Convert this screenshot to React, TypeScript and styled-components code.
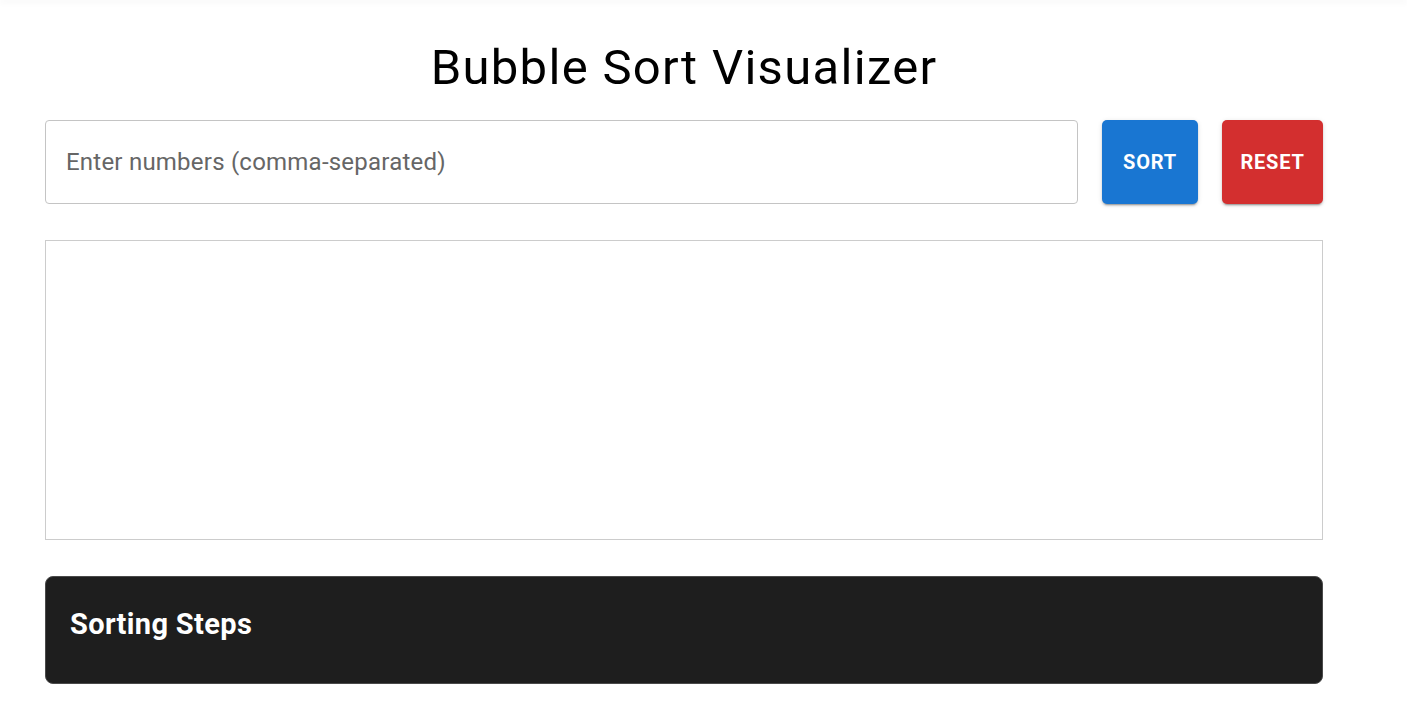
import React from "react";
import styled, { createGlobalStyle } from "styled-components";

const GlobalStyle = createGlobalStyle`
  html, body {
    margin: 0;
    padding: 0;
    background: #ffffff;
    font-family: Roboto, "Noto Sans", "Liberation Sans", sans-serif;
  }
  * { box-sizing: border-box; }
`;

const TopShade = styled.div`
  height: 0;
  width: 100%;
  box-shadow: 0 1px 6px 1px rgba(0, 0, 0, 0.07);
`;

const Page = styled.main`
  padding: 0 0 33px 45px;
`;

const Container = styled.div`
  width: 1278px;
  display: flex;
  flex-direction: column;
`;

const Title = styled.h1`
  margin: 40px 0 0;
  font-size: 49px;
  font-weight: 400;
  line-height: 56px;
  letter-spacing: 1.3px;
  text-align: center;
  color: #000000;
`;

const Controls = styled.div`
  margin-top: 24px;
  display: flex;
  align-items: stretch;
  gap: 24px;
  height: 84px;
`;

const NumberInput = styled.input`
  flex: 1;
  min-width: 0;
  height: 100%;
  border: 1px solid #c4c4c4;
  border-radius: 4px;
  padding: 0 20px;
  font-family: Roboto, "Noto Sans", sans-serif;
  font-size: 24px;
  letter-spacing: 0.00938em;
  color: #222;
  outline: none;
  background: #fff;
  &::placeholder {
    color: #666666;
  }
`;

const ActionButton = styled.button<{ $bg: string; $width: number }>`
  width: ${(p) => p.$width}px;
  height: 100%;
  padding: 0;
  border: none;
  border-radius: 5px;
  background: ${(p) => p.$bg};
  color: #ffffff;
  font-family: Roboto, "Noto Sans", sans-serif;
  font-size: 20px;
  font-weight: 700;
  letter-spacing: 0.04em;
  text-transform: uppercase;
  cursor: pointer;
  box-shadow: 0px 3px 1px -2px rgba(0, 0, 0, 0.2),
    0px 2px 2px 0px rgba(0, 0, 0, 0.14), 0px 1px 5px 0px rgba(0, 0, 0, 0.12);
`;

const Canvas = styled.div`
  margin-top: 36px;
  height: 300px;
  border: 1px solid #cccccc;
  background: #ffffff;
`;

const StepsPanel = styled.section`
  margin-top: 36px;
  height: 108px;
  padding: 30px 24px 0;
  background: #1e1e1e;
  border: 1px solid #4a4a4a;
  border-radius: 8px;
`;

const StepsTitle = styled.h2`
  margin: 0;
  font-size: 29px;
  font-weight: 700;
  letter-spacing: 0.35px;
  line-height: normal;
  color: #ffffff;
`;

export default function App() {
  return (
    <>
      <GlobalStyle />
      <TopShade />
      <Page>
        <Container>
          <Title>Bubble Sort Visualizer</Title>
          <Controls>
            <NumberInput placeholder="Enter numbers (comma-separated)" />
            <ActionButton $bg="#1976d2" $width={96}>Sort</ActionButton>
            <ActionButton $bg="#d32f2f" $width={101}>Reset</ActionButton>
          </Controls>
          <Canvas />
          <StepsPanel>
            <StepsTitle>Sorting Steps</StepsTitle>
          </StepsPanel>
        </Container>
      </Page>
    </>
  );
}
